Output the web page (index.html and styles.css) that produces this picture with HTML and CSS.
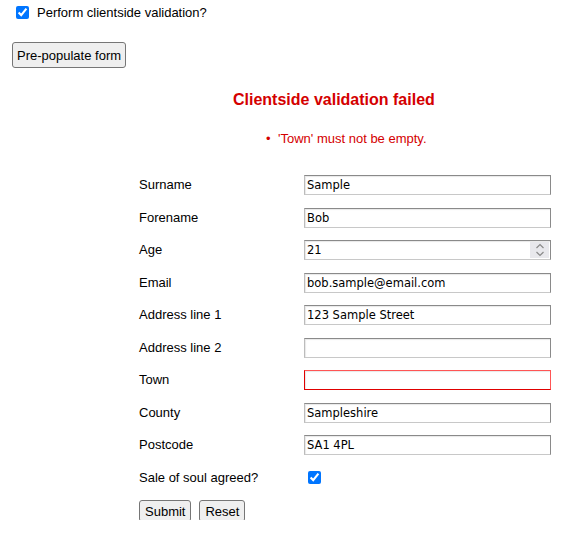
FILE: index.html
```html
<!DOCTYPE html>
<html>
<head>
<meta charset="utf-8">
<link rel="stylesheet" href="styles.css">
</head>
<body>
<label class="toggle"><input type="checkbox" checked> Perform clientside validation?</label>
<div class="prepop"><button type="button" class="btn">Pre-populate form</button></div>
<div class="summary">
  <h2 class="summary-title">Clientside validation failed</h2>
  <ul class="summary-list">
    <li>'Town' must not be empty.</li>
  </ul>
</div>
<form class="form">
  <label class="lbl">Surname</label><input class="field" type="text" value="Sample">
  <label class="lbl">Forename</label><input class="field" type="text" value="Bob">
  <label class="lbl">Age</label><div class="field number"><span>21</span><span class="spin"><svg width="10" height="14" viewBox="0 0 10 14"><path d="M1.5 5 L5 1.5 L8.5 5 M1.5 9 L5 12.5 L8.5 9" fill="none" stroke="#8a8a8a" stroke-width="1.2"/></svg></span></div>
  <label class="lbl">Email</label><input class="field" type="text" value="bob.sample@email.com">
  <label class="lbl">Address line 1</label><input class="field" type="text" value="123 Sample Street">
  <label class="lbl">Address line 2</label><input class="field" type="text" value="">
  <label class="lbl">Town</label><input class="field invalid" type="text" value="">
  <label class="lbl">County</label><input class="field" type="text" value="Sampleshire">
  <label class="lbl">Postcode</label><input class="field" type="text" value="SA1 4PL">
  <label class="lbl">Sale of soul agreed?</label><div class="chk"><input type="checkbox" checked></div>
  <div class="actions"><button type="button" class="btn">Submit</button><button type="button" class="btn">Reset</button></div>
</form>
</body>
</html>
```
FILE: styles.css
```css
html, body { background: #fff; }
body {
  margin: 0;
  padding: 0 12px;
  font-family: "Liberation Sans", Arial, sans-serif;
  font-size: 13px;
  color: #000;
}
.toggle {
  display: flex;
  align-items: center;
  height: 25px;
}
.toggle input {
  margin: 0 8px 0 4px;
  width: 13px;
  height: 13px;
}
.prepop { margin-top: 17px; }
.btn {
  font-family: "Liberation Sans", Arial, sans-serif;
  font-size: 13px;
  color: #000;
  background: #efefef;
  border: 1px solid #767676;
  border-radius: 3px;
  padding: 0 4px;
  height: 26px;
}
.summary {
  padding-left: 221px;
  margin-top: 22px;
}
.summary-title {
  margin: 0;
  font-size: 16px;
  font-weight: bold;
  color: #d40000;
  line-height: 20px;
}
.summary-list {
  margin: 21px 0 0;
  padding-left: 33px;
  list-style: none;
  color: #d40000;
  font-size: 13px;
  line-height: 16px;
}
.summary-list li::before {
  content: "\2022";
  display: inline-block;
  width: 12px;
}
.form {
  margin: 28px 0 0 127px;
  display: grid;
  grid-template-columns: 165px 247px;
  grid-auto-rows: 20px;
  row-gap: 12.5px;
  align-items: center;
}
.lbl { line-height: 16px; }
.field {
  box-sizing: border-box;
  height: 20px;
  width: 247px;
  margin: 0;
  padding: 0 2px;
  font-family: "DejaVu Sans", Verdana, sans-serif;
  font-size: 11.5px;
  color: #000;
  background: #fff;
  border: 1px solid;
  border-color: #8a8a8a #8a8a8a #c8c8c8 #bcbcbc;
  box-shadow: inset 1px 1px 1px #e8e8e8;
  outline: none;
}
.field.invalid {
  border-color: #ff5555 #ff5555 #e00000 #e00000;
}
.number {
  display: flex;
  align-items: center;
  justify-content: space-between;
  padding-right: 1px;
}
.spin {
  display: flex;
  align-items: center;
  justify-content: center;
  width: 19px;
  height: 16px;
  background: #e8e8ec;
}
.chk input {
  margin: 0 0 0 4px;
  width: 13px;
  height: 13px;
  display: block;
}
.actions {
  grid-column: 1 / 3;
  display: flex;
  gap: 8px;
  padding-top: 2px;
}
.actions .btn { height: 22px; padding: 0 5px; }
```
